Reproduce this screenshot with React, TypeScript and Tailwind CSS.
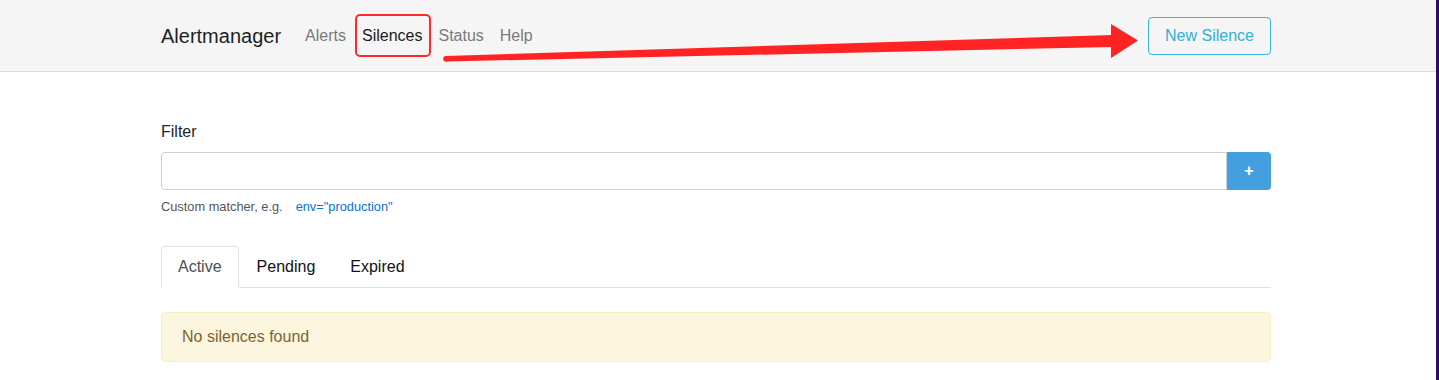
import React from "react";

export default function App() {
  return (
    <div
      className="relative flex w-[1439px] h-[380px] overflow-hidden bg-white"
      style={{ fontFamily: '"Liberation Sans", Arial, sans-serif' }}
    >
      <div className="w-[1436px] shrink-0">
        {/* Navbar */}
        <div className="h-[72px] bg-[#f5f5f5] border-b border-[#dcdcdc]">
          <div className="ml-[161px] w-[1110px] h-full flex items-center">
            <div className="text-[20px] text-[#1f1f1f] leading-[30px] mr-[16px]">Alertmanager</div>
            <nav className="flex items-center text-[16px] leading-[24px]">
              <span className="px-[8px] text-[#7a7a7a]">Alerts</span>
              <span className="relative px-[8px] text-[#1a1a1a]">
                Silences
                <span className="absolute left-[1px] right-[-1px] top-[-10px] bottom-[-9px] border-[2.5px] border-[#ff2a2a] rounded-[5px]" />
              </span>
              <span className="px-[8px] text-[#7a7a7a]">Status</span>
              <span className="px-[8px] text-[#7a7a7a]">Help</span>
            </nav>
            <div className="ml-auto">
              <button className="h-[38px] w-[123px] border border-[#3db5d8] rounded-[4px] text-[16px] text-[#33b0d6] bg-transparent">
                New Silence
              </button>
            </div>
          </div>
        </div>

        {/* Content */}
        <div className="ml-[161px] w-[1110px] pt-[48px]">
          <div className="text-[16px] leading-[24px] text-[#212529] mb-[8px]">Filter</div>
          <div className="flex h-[38px]">
            <div className="flex-1 border border-[#d0d0d0] rounded-l-[4px] bg-white" />
            <div className="w-[44px] bg-[#449fe0] rounded-r-[4px] flex items-center justify-center text-white text-[16px] font-bold">
              +
            </div>
          </div>
          <div className="mt-[7px] text-[12.8px] leading-[19px] text-[#555]">
            Custom matcher, e.g.<span className="ml-[13px] text-[#0b72d0]">env="production"</span>
          </div>

          {/* Tabs */}
          <div className="mt-[30px] flex border-b border-[#dee2e6] text-[16px] leading-[24px]">
            <div className="px-[16px] pt-[8px] pb-[7px] -mb-px border border-[#dee2e6] border-b-white rounded-t-[4px] bg-white text-[#495057]">
              Active
            </div>
            <div className="pl-[17px] pr-[17px] pt-[8px] pb-[7px] border border-transparent text-[#111]">Pending</div>
            <div className="px-[16px] pt-[8px] pb-[7px] border border-transparent text-[#111]">Expired</div>
          </div>

          {/* Alert */}
          <div className="mt-[24px] h-[50px] px-[20px] flex items-center border border-[#f8efc4] bg-[#fcf6de] rounded-[4px] text-[16px] text-[#7f6230]">
            No silences found
          </div>
        </div>
      </div>
      <div className="w-[3px] shrink-0 bg-[#2a0f5e]" />

      {/* Annotation arrow */}
      <svg className="absolute left-0 top-0 pointer-events-none" width="1439" height="380">
        <path d="M446 56 L1113 35 L1113 47 L446 61.5 Z" fill="#ff2323" />
        <circle cx="446" cy="58.7" r="2.8" fill="#ff2323" />
        <path d="M1111 24 L1138 40.5 L1111 58 Z" fill="#ff2323" />
      </svg>
    </div>
  );
}
